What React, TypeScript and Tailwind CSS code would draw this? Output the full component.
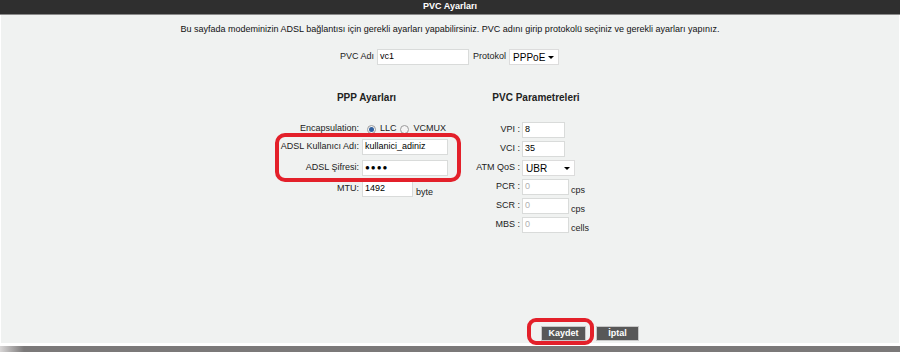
import React from "react";

const font = "font-['Liberation_Sans',Arial,sans-serif]";

function TextBox({ value, w, muted = false, password = false }: { value: string; w: string; muted?: boolean; password?: boolean }) {
  return (
    <div className={`${w} h-[16px] bg-white border border-[#d9dbda] flex items-center pl-[2px] text-[9px] ${muted ? "text-[#b0b0b0]" : "text-black"}`}>
      {password ? <span className="tracking-[1px] text-[8px] leading-none">●●●●</span> : value}
    </div>
  );
}

function SelectBox({ value, w }: { value: string; w: string }) {
  return (
    <div className={`${w} h-[16px] bg-white border border-[#dcdcdc] flex items-center justify-between pl-[3px] pr-[4px] text-[10px] text-black`}>
      <span>{value}</span>
      <span className="w-0 h-0 border-l-[3px] border-r-[3px] border-t-[3px] border-l-transparent border-r-transparent border-t-black" />
    </div>
  );
}

function Radio({ checked }: { checked?: boolean }) {
  return (
    <span className="w-[9px] h-[9px] rounded-full border border-[#9a9a9a] bg-[#f4f4f4] flex items-center justify-center">
      {checked && <span className="w-[5px] h-[5px] rounded-full bg-[#2f5f9e]" />}
    </span>
  );
}

function RightRow({ label, children, unit }: { label: string; children: React.ReactNode; unit?: string }) {
  return (
    <div className="flex items-center h-[16px]">
      <div className="w-[49px] text-right text-[9px] text-[#222] whitespace-nowrap">{label}</div>
      <div className="ml-[2px]">{children}</div>
      {unit && <span className="ml-[2px] self-end -mb-[2px] text-[9px] text-[#222]">{unit}</span>}
    </div>
  );
}

function GrayButton({ label, w }: { label: string; w: string }) {
  return (
    <div className={`${w} h-[15px] bg-[#585858] border border-[#c8c8c8] flex items-center justify-center text-white font-bold text-[9px] leading-none`}>
      {label}
    </div>
  );
}

export default function App() {
  return (
    <div className={`w-[900px] h-[352px] flex flex-col bg-[#f0f2f1] ${font} overflow-hidden`}>
      {/* Title bar */}
      <div className="h-[15px] shrink-0 bg-[#2f2f2f] border-b border-[#8a8a8a] flex items-center justify-center text-white font-bold text-[9px]">
        PVC Ayarları
      </div>

      <div className="relative flex-1 flex flex-col border-x border-white">
        <p className="mt-[8px] h-[12px] leading-[12px] text-center text-[9px] text-[#111]">
          Bu sayfada modeminizin ADSL bağlantısı için gerekli ayarları yapabilirsiniz. PVC adını girip protokolü seçiniz ve gerekli ayarları yapınız.
        </p>

        {/* PVC name / protocol */}
        <div className="mt-[14px] flex items-center pl-[339px] text-[9px] text-[#222]">
          <span>PVC Adı</span>
          <div className="ml-[3px]"><TextBox value="vc1" w="w-[92px]" /></div>
          <span className="ml-[4px]">Protokol</span>
          <div className="ml-[3px]"><SelectBox value="PPPoE" w="w-[50px]" /></div>
        </div>

        {/* Two columns */}
        <div className="mt-[27px] flex pl-[277px]">
          {/* PPP settings */}
          <div className="relative w-[177px] flex flex-col">
            <div className="h-[12px] leading-[12px] text-center font-bold text-[10px] text-[#222]">PPP Ayarları</div>
            <div className="mt-[17px] h-[16px] flex items-center text-[9px] text-[#222]">
              <div className="w-[81px] text-right">Encapsulation:</div>
              <div className="ml-[8px]"><Radio checked /></div>
              <span className="ml-[4px]">LLC</span>
              <div className="ml-[3px]"><Radio /></div>
              <span className="ml-[5px]">VCMUX</span>
            </div>
            <div className="mt-[2px] h-[16px] flex items-center text-[9px] text-[#222]">
              <div className="w-[81px] text-right whitespace-nowrap">ADSL Kullanıcı Adı:</div>
              <div className="ml-[3px]"><TextBox value="kullanici_adiniz" w="w-[86px]" /></div>
            </div>
            <div className="mt-[5px] h-[16px] flex items-center text-[9px] text-[#222]">
              <div className="w-[81px] text-right">ADSL Şifresi:</div>
              <div className="ml-[3px]"><TextBox value="" password w="w-[86px]" /></div>
            </div>
            <div className="mt-[5px] h-[16px] flex items-center text-[9px] text-[#222]">
              <div className="w-[81px] text-right">MTU:</div>
              <div className="ml-[3px]"><TextBox value="1492" w="w-[51px]" /></div>
              <span className="ml-[3px] self-end -mb-[2px]">byte</span>
            </div>

            {/* annotation highlight */}
            <div className="absolute left-[-3px] top-[41px] w-[186px] h-[49px] border-[4px] border-[#e3202a] rounded-[10px]" />
          </div>

          {/* PVC parameters */}
          <div className="ml-[16px] w-[130px] flex flex-col">
            <div className="h-[12px] leading-[12px] text-center font-bold text-[10px] text-[#222]">PVC Parametreleri</div>
            <div className="mt-[18px] flex flex-col gap-[3px]">
              <RightRow label="VPI :"><TextBox value="8" w="w-[43px]" /></RightRow>
              <RightRow label="VCI :"><TextBox value="35" w="w-[43px]" /></RightRow>
              <RightRow label="ATM QoS :"><SelectBox value="UBR" w="w-[53px]" /></RightRow>
              <RightRow label="PCR :" unit="cps"><TextBox value="0" muted w="w-[47px]" /></RightRow>
              <RightRow label="SCR :" unit="cps"><TextBox value="0" muted w="w-[47px]" /></RightRow>
              <RightRow label="MBS :" unit="cells"><TextBox value="0" muted w="w-[47px]" /></RightRow>
            </div>
          </div>
        </div>

        <div className="flex-1" />

        {/* Buttons */}
        <div className="flex items-start pl-[540px] pb-[2px] gap-[10px]">
          <div className="relative flex">
            <GrayButton label="Kaydet" w="w-[45px]" />
            <div className="absolute left-[-14px] top-[-8px] w-[67px] h-[27px] border-[4px] border-[#e3202a] rounded-[9px]" />
          </div>
          <GrayButton label="İptal" w="w-[43px]" />
        </div>
      </div>

      {/* Bottom edge */}
      <div className="h-[3px] shrink-0 bg-white" />
      <div className="h-[6px] shrink-0 bg-[linear-gradient(to_right,#d8d6d6_0px,#7b7979_24px,#7b7979_100%)]" />
    </div>
  );
}
